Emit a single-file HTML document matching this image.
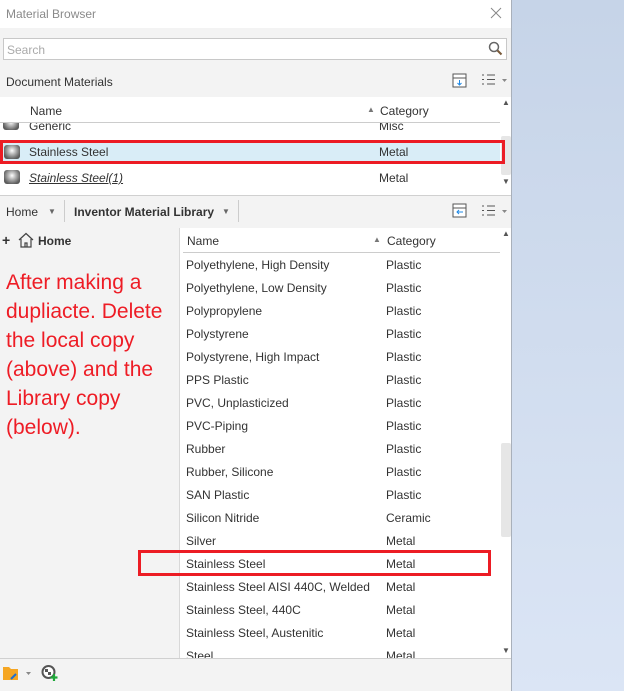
<!DOCTYPE html>
<html><head><style>
*{margin:0;padding:0;box-sizing:border-box}
body{width:624px;height:691px;overflow:hidden;position:relative;font-family:"Liberation Sans",sans-serif;font-size:12px;color:#333;background:linear-gradient(#c6d4e8,#dbe5f5)}
.a{position:absolute;white-space:nowrap}
.panel{position:absolute;left:0;top:0;width:512px;height:691px;background:#f3f3f3;border-right:1px solid #a9b0ba}
.red{position:absolute;border:3px solid #ec1c24}
.ico{position:absolute;width:16px;height:14px;border-radius:3px;background:radial-gradient(circle at 50% 40%,#fff 0,#bbb 30%,#666 70%,#444)}
.note{position:absolute;left:6px;color:#ee1c25;font-size:21px;line-height:29px;white-space:nowrap;font-family:"Liberation Sans",sans-serif}
</style></head><body>
<div class="panel">
 <div class="a" style="left:0;top:0;width:511px;height:28px;background:#fff"></div>
 <div class="a" style="left:6px;top:7px;color:#8a8a8a;font-size:12px">Material Browser</div>
 <svg class="a" style="left:490px;top:7px" width="12" height="12"><path d="M1 1l10 10M11 1L1 11" stroke="#888" stroke-width="1"/></svg>
 <div class="a" style="left:3px;top:38px;width:504px;height:22px;background:#fff;border:1px solid #c8c8c8"></div>
 <div class="a" style="left:7px;top:43px;color:#aaa">Search</div>
 <svg class="a" style="left:488px;top:41px" width="15" height="15"><circle cx="6" cy="6" r="4.5" fill="none" stroke="#666" stroke-width="1.5"/><path d="M9.5 9.5l4 4" stroke="#7a5a3a" stroke-width="2"/></svg>
 <div class="a" style="left:6px;top:75px;color:#333">Document Materials</div>
 <svg class="a" style="left:452px;top:73px" width="16" height="16"><rect x="1" y="1" width="13" height="13" fill="#fff" stroke="#555"/><path d="M1 5h13" stroke="#555"/><path d="M7.5 7v5M5.5 10l2 2 2-2" stroke="#1e88e5" fill="none"/></svg>
 <svg class="a" style="left:481px;top:74px" width="28" height="12"><path d="M1 1h2M1 5.5h2M1 10h2M6 1h8M6 5.5h8M6 10h8" stroke="#555"/><path d="M21 5h5l-2.5 3z" fill="#888"/></svg>
 <!-- doc list -->
 <div class="a" style="left:0;top:97px;width:511px;height:98px;background:#fff;overflow:hidden">
  <div class="ico" style="left:3px;top:20px;height:13px"></div>
  <div class="a" style="left:29px;top:22px">Generic</div>
  <div class="a" style="left:379px;top:22px">Misc</div>
  <div class="a" style="left:0;top:0;width:500px;height:25px;background:#fff"></div>
  <div class="a" style="left:30px;top:7px">Name</div>
  <div class="a" style="left:367px;top:8px;font-size:8px;color:#777">▲</div>
  <div class="a" style="left:380px;top:7px">Category</div>
  <div class="a" style="left:0;top:25px;width:500px;height:1px;background:#ccc"></div>
  <div class="a" style="left:0;top:44px;width:500px;height:22px;background:#d9edf7"></div>
  <div class="ico" style="left:4px;top:48px"></div>
  <div class="a" style="left:29px;top:48px">Stainless Steel</div>
  <div class="a" style="left:379px;top:48px">Metal</div>
  <div class="ico" style="left:4px;top:73px"></div>
  <div class="a" style="left:29px;top:74px;font-style:italic;text-decoration:underline">Stainless Steel(1)</div>
  <div class="a" style="left:379px;top:74px">Metal</div>
  <div class="a" style="left:501px;top:39px;width:10px;height:39px;background:#e6e6e6;border-radius:2px"></div>
  <div class="a" style="left:502px;top:1px;font-size:8px;color:#555">▲</div>
  <div class="a" style="left:502px;top:80px;font-size:8px;color:#555">▼</div>
 </div>
 <div class="a" style="left:0;top:195px;width:511px;height:1px;background:#d0d0d0"></div>
 <div class="red" style="left:0;top:140px;width:505px;height:24px"></div>
 <!-- library toolbar -->
 <div class="a" style="left:6px;top:205px">Home</div>
 <div class="a" style="left:48px;top:207px;font-size:8px;color:#666">▼</div>
 <div class="a" style="left:64px;top:200px;width:1px;height:22px;background:#ccc"></div>
 <div class="a" style="left:74px;top:205px;font-weight:bold">Inventor Material Library</div>
 <div class="a" style="left:222px;top:207px;font-size:8px;color:#666">▼</div>
 <div class="a" style="left:238px;top:200px;width:1px;height:22px;background:#ccc"></div>
 <svg class="a" style="left:452px;top:203px" width="16" height="16"><rect x="1" y="1" width="13" height="13" fill="#fff" stroke="#555"/><path d="M1 5h13" stroke="#555"/><path d="M11 9H5M7 7l-2 2 2 2" stroke="#1e88e5" fill="none"/></svg>
 <svg class="a" style="left:481px;top:205px" width="28" height="12"><path d="M1 1h2M1 5.5h2M1 10h2M6 1h8M6 5.5h8M6 10h8" stroke="#555"/><path d="M21 5h5l-2.5 3z" fill="#888"/></svg>
 <!-- left tree -->
 <div class="a" style="left:2px;top:232px;font-weight:bold;font-size:14px">+</div>
 <svg class="a" style="left:18px;top:232px" width="16" height="16"><path d="M1 8L8 1.5 15 8M3 7v8h10V7M7 15v-4h2v4" fill="none" stroke="#444" stroke-width="1.2"/></svg>
 <div class="a" style="left:38px;top:234px;font-weight:bold">Home</div>
 <div class="note" style="top:268px">After making a</div>
 <div class="note" style="top:297px">dupliacte. Delete</div>
 <div class="note" style="top:326px">the local copy</div>
 <div class="note" style="top:355px">(above) and the</div>
 <div class="note" style="top:384px">Library copy</div>
 <div class="note" style="top:413px">(below).</div>
 <!-- right list -->
 <div class="a" style="left:179px;top:228px;width:1px;height:430px;background:#d8d8d8"></div>
 <div class="a" style="left:180px;top:228px;width:331px;height:430px;background:#fff;overflow:hidden">
  <div class="a" style="left:7px;top:6px">Name</div>
  <div class="a" style="left:193px;top:7px;font-size:8px;color:#777">▲</div>
  <div class="a" style="left:207px;top:6px">Category</div>
  <div class="a" style="left:3px;top:24px;width:317px;height:1px;background:#ccc"></div>
  <div class="a" style="left:321px;top:215px;width:10px;height:94px;background:#e6e6e6;border-radius:2px"></div>
  <div class="a" style="left:322px;top:1px;font-size:8px;color:#555">▲</div>
  <div class="a" style="left:322px;top:418px;font-size:8px;color:#555">▼</div>
  <div class="a" style="left:6px;top:26px;line-height:23px">Polyethylene, High Density<br>Polyethylene, Low Density<br>Polypropylene<br>Polystyrene<br>Polystyrene, High Impact<br>PPS Plastic<br>PVC, Unplasticized<br>PVC-Piping<br>Rubber<br>Rubber, Silicone<br>SAN Plastic<br>Silicon Nitride<br>Silver<br>Stainless Steel<br>Stainless Steel AISI 440C, Welded<br>Stainless Steel, 440C<br>Stainless Steel, Austenitic<br>Steel</div>
  <div class="a" style="left:206px;top:26px;line-height:23px">Plastic<br>Plastic<br>Plastic<br>Plastic<br>Plastic<br>Plastic<br>Plastic<br>Plastic<br>Plastic<br>Plastic<br>Plastic<br>Ceramic<br>Metal<br>Metal<br>Metal<br>Metal<br>Metal<br>Metal</div>
 </div>
 <div class="red" style="left:138px;top:550px;width:353px;height:26px"></div>
 <div class="a" style="left:0;top:658px;width:511px;height:1px;background:#d0d0d0"></div>
 <svg class="a" style="left:2px;top:664px" width="30" height="18"><path d="M1 3h6l2 2h7v11H1z" fill="#f5a623"/><path d="M9 15l5-5" stroke="#1e6fd0" stroke-width="2"/><path d="M24 8h5l-2.5 3z" fill="#888"/></svg>
 <svg class="a" style="left:41px;top:664px" width="18" height="18"><circle cx="7.5" cy="8" r="6" fill="#fff" stroke="#555" stroke-width="2"/><path d="M4 5h3v3H4zM7 8h3v3H7z" fill="#555"/><path d="M13 10v7M9.5 13.5h7" stroke="#1fa83a" stroke-width="2.2"/></svg>
</div>
</body></html>
